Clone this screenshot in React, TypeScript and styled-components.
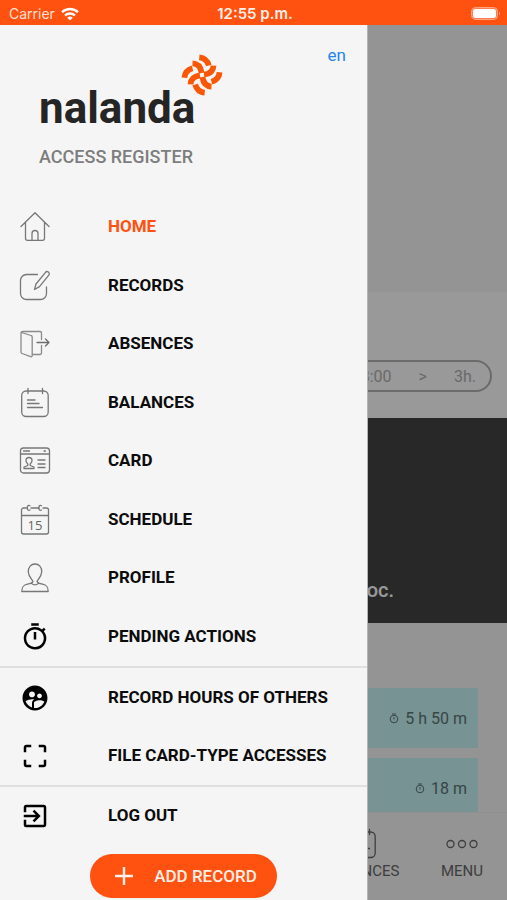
import React from "react";
import styled, { createGlobalStyle } from "styled-components";
import {
  MdOutlineTimer,
  MdSupervisedUserCircle,
  MdCropFree,
  MdExitToApp,
} from "react-icons/md";

const ORANGE = "#ff5110";

const GlobalStyle = createGlobalStyle`
  *, *::before, *::after { box-sizing: border-box; }
  body { margin: 0; font-family: Roboto, "Liberation Sans", sans-serif; }
  button { font: inherit; border: 0; cursor: pointer; }
  a { color: inherit; text-decoration: none; }
  svg { display: block; flex: none; }
`;

const Screen = styled.div`
  display: flex;
  flex-direction: column;
  min-height: 100vh;
`;

const StatusBar = styled.header`
  display: grid;
  grid-template-columns: 1fr auto 1fr;
  align-items: center;
  height: 25px;
  padding: 2px 6px 0 9px;
  background: ${ORANGE};
  color: #fff;
  font-family: Inter, sans-serif;
  font-size: 14px;
  line-height: 20px;
`;

const Carrier = styled.div`
  display: flex;
  align-items: center;
  gap: 6px;
  color: #ffe0d2;
`;

const Clock = styled.time`
  color: #fff0e8;
  font-size: 15px;
  font-weight: 600;
`;

const Battery = styled.div`
  justify-self: end;
`;

const Stage = styled.div`
  display: grid;
  flex: 1;
  grid-template-columns: minmax(0, 1fr);
  & > * { grid-area: 1 / 1; }
`;

const Page = styled.main`
  display: flex;
  flex-direction: column;
  background: #f7f7f7;
`;

const MapArea = styled.div`
  height: 267px;
`;

const SlotPanel = styled.section`
  display: flex;
  align-items: flex-end;
  height: 126px;
  padding: 0 15px 26px;
  background: #fff;
`;

const SlotPill = styled.div`
  display: flex;
  flex: 1;
  align-items: center;
  justify-content: flex-end;
  gap: 27px;
  height: 32px;
  padding-right: 14px;
  border: 2px solid #b2b2b2;
  border-radius: 16px;
  color: #b0b0b0;
  font-size: 16px;
`;

const DarkPanel = styled.section`
  display: flex;
  align-items: flex-end;
  justify-content: flex-end;
  height: 205px;
  padding: 0 113px 20px 0;
  background: #434343;
  color: #fff;
  font-size: 20px;
  font-weight: 500;
  line-height: 26px;
`;

const RecordList = styled.ul`
  display: flex;
  flex: 1 0 0;
  flex-direction: column;
  gap: 10px;
  min-height: 0;
  margin: 0;
  padding: 65px 29px 0;
  overflow: hidden;
  list-style: none;
`;

const RecordCard = styled.li`
  display: flex;
  flex: none;
  align-items: center;
  justify-content: flex-end;
  gap: 6px;
  height: 60px;
  padding-right: 11px;
  background: #c6f5f6;
  color: #5c7375;
  font-size: 16px;
`;

const TabBar = styled.nav`
  display: flex;
  flex: none;
  justify-content: flex-end;
  gap: 10px;
  height: 88px;
  border-top: 1px solid #f0f0f0;
  background: #f7f7f7;
`;

const Tab = styled.a`
  display: flex;
  flex-direction: column;
  align-items: center;
  gap: 1px;
  width: 90px;
  padding-top: 15px;
  color: #686868;
  font-size: 15px;
  line-height: 20px;
`;

const Scrim = styled.div`
  background: rgba(0, 0, 0, 0.4);
`;

const Drawer = styled.aside`
  display: flex;
  flex-direction: column;
  width: calc(100% - 140px);
  background: #f5f5f5;
  box-shadow: 1px 0 0 #b4b4b4;
`;

const DrawerHead = styled.div`
  display: flex;
  align-items: flex-start;
  justify-content: space-between;
  height: 172px;
  padding: 20px 21px 0 39px;
`;

const Brand = styled.div`
  padding-top: 9px;
`;

const BrandRow = styled.div`
  display: flex;
  align-items: flex-start;
`;

const Wordmark = styled.span`
  padding-top: 28px;
  margin-right: -14px;
  color: #252525;
  font-size: 44px;
  font-weight: 700;
  line-height: 52px;
`;

const Subtitle = styled.div`
  margin-top: 13px;
  color: #7d7d7d;
  font-size: 18px;
  font-weight: 500;
  line-height: 20px;
`;

const Language = styled.button`
  padding: 0;
  background: none;
  color: #2385ee;
  font-size: 17px;
  line-height: 20px;
`;

const MenuGroup = styled.ul<{ $height: number }>`
  display: grid;
  flex: none;
  grid-auto-rows: 1fr;
  min-height: ${(p) => p.$height}px;
  margin: 0;
  padding: 0 0 1px;
  list-style: none;
  & + & { border-top: 2px solid #dfdfdf; }
`;

const MenuLink = styled.a<{ $active?: boolean }>`
  display: grid;
  grid-template-columns: 70px 1fr;
  column-gap: 38px;
  align-items: center;
  height: 100%;
  color: ${(p) => (p.$active ? ORANGE : "#0c0c0c")};
  font-size: 17px;
  font-weight: 700;
  line-height: 20px;
`;

const IconCell = styled.span`
  display: flex;
  justify-content: center;
  padding-top: 2px;
  color: #000;
`;

const AddButton = styled.button`
  display: flex;
  flex: none;
  align-items: center;
  align-self: center;
  gap: 21px;
  height: 44px;
  margin-top: 11px;
  padding: 0 20px 0 25px;
  border-radius: 22px;
  background: ${ORANGE};
  color: #fff0e8;
  font-size: 17px;
  font-weight: 500;
`;

const Line = ({
  children,
  color = "#777",
}: {
  children: React.ReactNode;
  color?: string;
}) => (
  <svg
    width="32"
    height="32"
    viewBox="0 0 32 32"
    fill="none"
    stroke={color}
    strokeWidth="1.3"
    strokeLinecap="round"
    strokeLinejoin="round"
    aria-hidden="true"
  >
    {children}
  </svg>
);

const HomeIcon = () => (
  <Line>
    <path d="M2 15.5 16 1.8 30 15.5M6.5 11.5V27.5a1.8 1.8 0 0 0 1.8 1.8h15.4a1.8 1.8 0 0 0 1.8-1.8V11.5M13 29v-6.5a3 3 0 0 1 6 0V29" />
  </Line>
);

const RecordsIcon = () => (
  <Line>
    <path d="M18.5 4.5H7.5a6 6 0 0 0-6 6v13a6 6 0 0 0 6 6h14a6 6 0 0 0 6-6v-6.5" />
    <path d="M15.5 19.5 17 14 26.5 2.3a2.2 2.2 0 0 1 3.5 2.6L20.5 16.6Z" />
  </Line>
);

const AbsencesIcon = () => (
  <Line color="#8a8a8a">
    <path d="M2.5 4.5 12 7.5a1.5 1.5 0 0 1 1.2 1.5V27.500c0 1-.6 1.5-1.5 1.2L3 25.5a1.5 1.5 0 0 1-1-1.4V5.5C2 4 2.5 3.5 4 3.5H21a1.5 1.5 0 0 1 1.5 1.5v6.5M22.5 17.5V25a1.5 1.5 0 0 1-1.5 1.5h-7.5" />
    <path d="M18 14.5h12M26.5 11l3.5 3.5-3.5 3.5" stroke="#6e6e6e" />
  </Line>
);

const BalancesIcon = ({ color }: { color?: string }) => (
  <Line color={color}>
    <rect x="2.7" y="4" width="26.5" height="25.5" rx="4.5" />
    <path d="M9 1.5v5M23.5 1.5v5M8.5 13h7.5M8.5 16.5h11.5M8.5 20.5h15" />
  </Line>
);

const CardIcon = () => (
  <Line>
    <rect x="1.5" y="3" width="29" height="25" rx="3" />
    <path d="M1.5 9h29M4.5 6h6M25 6h1.5M19 15h7M19 19h7M19 22.5h7" />
    <path d="M5 23.5v-1.5l3.8-1.5v-1.5c-3.2-3-2-6.5 1.2-6.5s4.4 3.5 1.2 6.5v1.5l3.8 1.5v1.5Z" />
  </Line>
);

const CalendarNumber = styled.text`
  fill: #666;
  stroke: none;
  font-family: "Open Sans", sans-serif;
  font-size: 13px;
  font-weight: 400;
`;

const ScheduleIcon = () => (
  <Line>
    <path d="M7.5 4H4.5a2 2 0 0 0-2 2v22a2 2 0 0 0 2 2h23a2 2 0 0 0 2-2V6a2 2 0 0 0-2-2H24M12 4h8M2.5 11.5h27" />
    <path d="M11 6c-1.5.8-2.7 0-2.7-2.2s1.2-2.9 2.7-2.1M22.5 6c-1.5.8-2.7 0-2.7-2.2s1.2-2.9 2.7-2.1" />
    <CalendarNumber x="16" y="26" textAnchor="middle">15</CalendarNumber>
  </Line>
);

const ProfileIcon = () => (
  <Line>
    <path d="M14 19.5c-.4-1.5-4.5-4.5-4.7-9.5C9.2 5 12 2 16 2s6.800 3 6.700 8c-.2 5-4.3 8-4.7 9.5M14 19.5c-.6 1.6-2.5 2-5.5 2.6-4.5.9-5.7 3-5.7 7.4h26.4c0-4.400-1.2-6.500-5.700-7.400-3-.6-4.900-1-5.500-2.600M12.5 21.5c2 1.500 5 1.500 7 0" />
  </Line>
);

const DotsIcon = () => (
  <Line color="#686868">
    <circle cx="4.5" cy="16" r="3.5" />
    <circle cx="16" cy="16" r="3.5" />
    <circle cx="27.5" cy="16" r="3.5" />
  </Line>
);

const WatchIcon = () => (
  <svg width="10" height="12" viewBox="0 0 10 12" fill="none" stroke="currentColor" aria-hidden="true">
    <circle cx="5" cy="7" r="3.8" />
    <path d="M3 2h4M5 5v2.5" />
  </svg>
);

const LogoMark = () => (
  <svg width="42" height="42" viewBox="-62 -62 124 124" fill="none" stroke="#f95706" strokeWidth="17" aria-hidden="true">
    {[0, 90, 180, 270].map((angle) => (
      <g key={angle} transform={`rotate(${angle})`}>
        <path d="M-8-52Q14-50 20-28" />
        <path d="M-28-34Q-5-33-1-6" />
      </g>
    ))}
  </svg>
);

const WifiIcon = () => (
  <svg width="18" height="14" viewBox="0 0 18 14" fill="none" stroke="#fff" strokeWidth="2.4" aria-hidden="true">
    <path d="M1 5.2a11.5 11.5 0 0 1 16 0M4 8.5a7.2 7.2 0 0 1 10 0" />
    <path d="M9 13.5 6.2 10.8a4 4 0 0 1 5.6 0Z" fill="#fff" stroke="none" />
  </svg>
);

const BatteryIcon = () => (
  <svg width="30" height="14" viewBox="0 0 30 14" aria-hidden="true">
    <rect x=".5" y=".5" width="26" height="12" rx="4" fill="#ff7d4c" stroke="#ffa582" />
    <rect x="2" y="2" width="23" height="9" rx="2.5" fill="#fff" />
    <path d="M28 4.5a2.5 2.5 0 0 1 0 4Z" fill="#ffa582" />
  </svg>
);

type Item = { label: string; icon: React.ReactNode; active?: boolean };

const groups: { height: number; items: Item[] }[] = [
  {
    height: 469,
    items: [
      { label: "HOME", icon: <HomeIcon />, active: true },
      { label: "RECORDS", icon: <RecordsIcon /> },
      { label: "ABSENCES", icon: <AbsencesIcon /> },
      { label: "BALANCES", icon: <BalancesIcon /> },
      { label: "CARD", icon: <CardIcon /> },
      { label: "SCHEDULE", icon: <ScheduleIcon /> },
      { label: "PROFILE", icon: <ProfileIcon /> },
      { label: "PENDING ACTIONS", icon: <MdOutlineTimer size={30} /> },
    ],
  },
  {
    height: 119,
    items: [
      { label: "RECORD HOURS OF OTHERS", icon: <MdSupervisedUserCircle size={30} /> },
      { label: "FILE CARD-TYPE ACCESSES", icon: <MdCropFree size={30} /> },
    ],
  },
  {
    height: 58,
    items: [{ label: "LOG OUT", icon: <MdExitToApp size={30} /> }],
  },
];

export default function App() {
  return (
    <Screen>
      <GlobalStyle />
      <StatusBar>
        <Carrier>
          Carrier
          <WifiIcon />
        </Carrier>
        <Clock>12:55 p.m.</Clock>
        <Battery>
          <BatteryIcon />
        </Battery>
      </StatusBar>
      <Stage>
        <Page>
          <MapArea />
          <SlotPanel>
            <SlotPill>
              <span>8:00</span>
              <span>&gt;</span>
              <span>3h.</span>
            </SlotPill>
          </SlotPanel>
          <DarkPanel>oc.</DarkPanel>
          <RecordList>
            <RecordCard>
              <WatchIcon />
              5 h 50 m
            </RecordCard>
            <RecordCard>
              <WatchIcon />
              18 m
            </RecordCard>
          </RecordList>
          <TabBar>
            <Tab href="#balances">
              <BalancesIcon color="#686868" />
              BALANCES
            </Tab>
            <Tab href="#menu">
              <DotsIcon />
              MENU
            </Tab>
          </TabBar>
        </Page>
        <Scrim />
        <Drawer>
          <DrawerHead>
            <Brand>
              <BrandRow>
                <Wordmark>nalanda</Wordmark>
                <LogoMark />
              </BrandRow>
              <Subtitle>ACCESS REGISTER</Subtitle>
            </Brand>
            <Language type="button">en</Language>
          </DrawerHead>
          <nav>
            {groups.map((group) => (
              <MenuGroup key={group.height} $height={group.height}>
                {group.items.map((item) => (
                  <li key={item.label}>
                    <MenuLink
                      href="#"
                      $active={item.active}
                      aria-current={item.active ? "page" : undefined}
                    >
                      <IconCell>{item.icon}</IconCell>
                      {item.label}
                    </MenuLink>
                  </li>
                ))}
              </MenuGroup>
            ))}
          </nav>
          <AddButton type="button">
            <svg width="18" height="18" viewBox="0 0 18 18" stroke="#fff0e8" strokeWidth="2.4" aria-hidden="true">
              <path d="M9 0v18M0 9h18" />
            </svg>
            ADD RECORD
          </AddButton>
        </Drawer>
      </Stage>
    </Screen>
  );
}
